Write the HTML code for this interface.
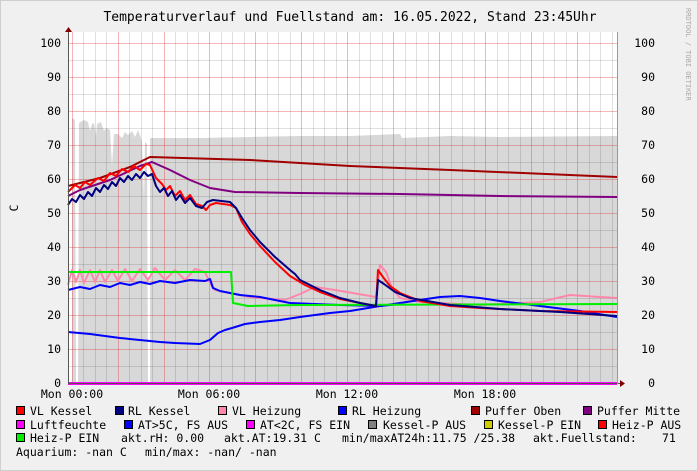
<!DOCTYPE html>
<html><head><meta charset="utf-8"><style>
body{margin:0;width:698px;height:471px;overflow:hidden;background:#f0f0f0}
svg{display:block}
text{font-family:"DejaVu Sans Mono","Liberation Mono",monospace;font-size:11.5px;fill:#000}
</style></head><body>
<svg width="698" height="471" viewBox="0 0 698 471">
<rect x="0" y="0" width="698" height="471" fill="#f0f0f0"/>
<rect x="0.5" y="0.5" width="697" height="470" fill="none" stroke="#cfcfcf"/>
<text x="350" y="21" text-anchor="middle" style="font-size:13px">Temperaturverlauf und Fuellstand am: 16.05.2022, Stand 23:45Uhr</text>
<text transform="translate(686,8) rotate(90)" style="font-size:7px;fill:#aaa">RRDTOOL / TOBI OETIKER</text>
<rect x="68" y="32" width="549" height="351" fill="#fff"/>
<polygon fill="#d8d8d8" points="72,383 72,118 75,120 76,383 78,383 79,123 84,120 88,122 90,131 92,124 94,123 96,136 97,124 101,122 104,131 106,128 110,130 112,166 114,134 118,134 122,138 125,132 128,135 132,131 135,137 138,130 141,138 142,142 144,200 145,142 147,144 148,383 150,383 150,138 200,138 250,137 300,136 350,136 400,134 402,138 450,136 500,137 617,136 617,383"/>
<g stroke="#000" stroke-opacity="0.12" stroke-width="1">
<path d="M68 60.5H617M68 94.5H617M68 128.5H617M68 162.5H617M68 196.5H617M68 230.5H617M68 264.5H617M68 298.5H617M68 332.5H617M68 366.5H617"/>
<path d="M83.5 32V383M95.5 32V383M106.5 32V383M129.5 32V383M141.5 32V383M152.5 32V383M175.5 32V383M187.5 32V383M198.5 32V383M221.5 32V383M232.5 32V383M244.5 32V383M267.5 32V383M278.5 32V383M290.5 32V383M313.5 32V383M324.5 32V383M336.5 32V383M359.5 32V383M370.5 32V383M382.5 32V383M405.5 32V383M416.5 32V383M428.5 32V383M451.5 32V383M462.5 32V383M474.5 32V383M497.5 32V383M508.5 32V383M520.5 32V383M543.5 32V383M554.5 32V383M566.5 32V383M589.5 32V383M600.5 32V383M612.5 32V383"/>
</g>
<g stroke="#e03030" stroke-opacity="0.35" stroke-width="1">
<path d="M68 43.5H617M68 77.5H617M68 111.5H617M68 145.5H617M68 179.5H617M68 213.5H617M68 247.5H617M68 281.5H617M68 315.5H617M68 349.5H617"/>
<path d="M72.5 32V383M118.5 32V383M164.5 32V383M209.5 32V383M255.5 32V383M301.5 32V383M347.5 32V383M393.5 32V383M439.5 32V383M485.5 32V383M531.5 32V383M577.5 32V383"/>
</g>
<g fill="none" stroke-width="2" stroke-linejoin="round">
<polyline stroke="#0000ff" points="68,332 90,334 120,338 160,342 175,343 200,344 210,340 218,333 225,330 232,328 245,324 260,322 280,320 300,317 330,313 350,311 380,306 400,304"/>
<polyline stroke="#ff88aa" points="68,285 72,270 76,282 80,270 84,283 90,270 95,282 100,270 105,282 112,270 118,281 125,269 132,281 140,269 148,280 155,268 165,280 175,270 185,280 195,269 205,272 210,283 215,290 250,297 285,300 300,294 315,287 335,290 376,297 380,265 386,272 392,288 400,298 420,302 480,305 540,302 570,295 600,297 617,298"/>
<polyline stroke="#0000ff" points="68,290 80,287 90,289 100,285 110,287 120,283 130,285 140,282 150,284 160,281 175,283 190,280 205,281 210,279 213,288 220,291 240,295 260,297 290,303 340,305 380,306 400,303 420,300 440,297 460,296 480,298 500,301 540,306 580,311 617,317"/>
<polyline stroke="#00ee00" points="68,272 231,272 233,303 248,306 300,305 617,304"/>
<polyline stroke="#800080" points="68,196 80,190 110,180 140,166 152,162 170,170 190,180 210,188 235,192 300,193 400,194 500,196 617,197"/>
<polyline stroke="#a00000" points="68,186 100,178 130,167 150,157 250,160 350,166 450,170 617,177"/>
<polyline stroke="#ff0000" points="68,192 75,185 80,188 85,182 90,185 98,178 104,181 110,173 116,176 122,169 128,172 134,166 140,170 146,164 150,165 156,178 162,184 166,190 170,186 175,196 180,191 185,200 190,195 196,204 202,206 206,210 210,205 216,203 230,205 236,208 242,222 250,234 260,246 275,262 290,276 305,285 320,292 340,299 360,303 376,306 378,270 383,277 390,286 400,293 420,301 450,306 480,308 540,311 617,312"/>
<polyline stroke="#000080" points="68,205 72,199 76,202 80,195 84,199 88,192 92,196 96,188 100,192 104,185 108,189 112,182 116,186 120,178 124,182 128,176 132,180 136,174 140,178 144,172 148,176 152,174 156,186 160,192 164,188 168,196 172,191 176,200 180,195 185,203 190,198 196,206 202,208 207,202 213,200 230,202 236,208 242,218 250,230 260,242 275,257 290,270 295,274 300,280 320,290 340,298 360,303 376,306 378,280 384,284 395,292 410,298 450,305 500,309 560,312 617,316"/>
</g>
<path d="M68 383.5H617" stroke="#ff00ff" stroke-width="3"/>
<path d="M68.5 32V384M68 383.5H620" stroke="#555" stroke-width="1"/>
<path d="M617.5 32V384" stroke="#999" stroke-width="1"/>
<path d="M65 32L68.5 27L72 32Z M620 380L625 383.5L620 387Z" fill="#800000"/>
<g text-anchor="end">
<text x="61" y="47">100</text><text x="61" y="81">90</text><text x="61" y="115">80</text><text x="61" y="149">70</text><text x="61" y="183">60</text><text x="61" y="217">50</text><text x="61" y="251">40</text><text x="61" y="285">30</text><text x="61" y="319">20</text><text x="61" y="353">10</text><text x="61" y="387">0</text>
<text x="655" y="47">100</text><text x="655" y="81">90</text><text x="655" y="115">80</text><text x="655" y="149">70</text><text x="655" y="183">60</text><text x="655" y="217">50</text><text x="655" y="251">40</text><text x="655" y="285">30</text><text x="655" y="319">20</text><text x="655" y="353">10</text><text x="655" y="387">0</text>
</g>
<text transform="translate(18,208) rotate(-90)" text-anchor="middle">C</text>
<text x="72" y="398" text-anchor="middle">Mon 00:00</text>
<text x="209" y="398" text-anchor="middle">Mon 06:00</text>
<text x="347" y="398" text-anchor="middle">Mon 12:00</text>
<text x="485" y="398" text-anchor="middle">Mon 18:00</text>
<g stroke="#000" stroke-width="1">
<rect x="16.5" y="406.5" width="8" height="8" fill="#ff0000"/>
<rect x="115.5" y="406.5" width="8" height="8" fill="#000080"/>
<rect x="218.5" y="406.5" width="8" height="8" fill="#ff88aa"/>
<rect x="338.5" y="406.5" width="8" height="8" fill="#0000ff"/>
<rect x="471.5" y="406.5" width="8" height="8" fill="#a00000"/>
<rect x="583.5" y="406.5" width="8" height="8" fill="#800080"/>
<rect x="16.5" y="420.5" width="8" height="8" fill="#ff00ff"/>
<rect x="124.5" y="420.5" width="8" height="8" fill="#0000ff"/>
<rect x="246.5" y="420.5" width="8" height="8" fill="#ff00ff"/>
<rect x="368.5" y="420.5" width="8" height="8" fill="#808080"/>
<rect x="484.5" y="420.5" width="8" height="8" fill="#cccc00"/>
<rect x="598.5" y="420.5" width="8" height="8" fill="#ff0000"/>
<rect x="16.5" y="433.5" width="8" height="8" fill="#00ee00"/>
</g>
<text x="30" y="415">VL Kessel</text>
<text x="128" y="415">RL Kessel</text>
<text x="232" y="415">VL Heizung</text>
<text x="352" y="415">RL Heizung</text>
<text x="485" y="415">Puffer Oben</text>
<text x="597" y="415">Puffer Mitte</text>
<text x="30" y="429">Luftfeuchte</text>
<text x="138" y="429">AT&gt;5C, FS AUS</text>
<text x="260" y="429">AT&lt;2C, FS EIN</text>
<text x="383" y="429">Kessel-P AUS</text>
<text x="498" y="429">Kessel-P EIN</text>
<text x="612" y="429">Heiz-P AUS</text>
<text x="30" y="442">Heiz-P EIN</text>
<text x="121" y="442">akt.rH: 0.00</text>
<text x="224" y="442">akt.AT:19.31 C</text>
<text x="342" y="442">min/maxAT24h:11.75 /25.38</text>
<text x="533" y="442">akt.Fuellstand:</text>
<text x="662" y="442">71</text>
<text x="16" y="456">Aquarium: -nan C</text>
<text x="145" y="456">min/max: -nan/ -nan</text>
</svg>
</body></html>
